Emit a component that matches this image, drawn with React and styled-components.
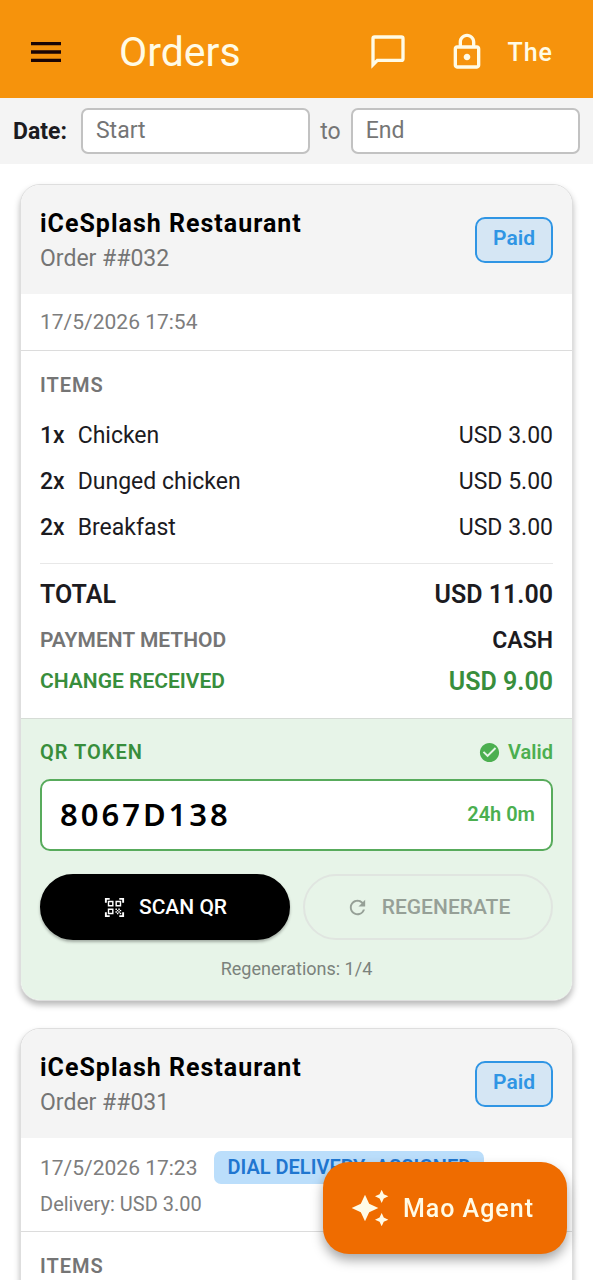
import React from "react";
import styled, { createGlobalStyle } from "styled-components";
import {
  MdAutoAwesome,
  MdCheckCircle,
  MdMenu,
  MdOutlineLock,
  MdQrCodeScanner,
  MdRefresh,
} from "react-icons/md";

const GlobalStyle = createGlobalStyle`
  * {
    box-sizing: border-box;
  }

  body {
    margin: 0;
    background-color: #ffffff;
    color: #1c1b1f;
    font-family: Roboto, "Liberation Sans", sans-serif;
  }

  h1, h2, h3, p, ul, dl, dd {
    margin: 0;
    padding: 0;
  }

  button, input {
    font-family: inherit;
  }
`;

const Screen = styled.div`
  display: flex;
  flex-direction: column;
  height: 100vh;
`;

const AppBar = styled.header`
  display: flex;
  align-items: center;
  flex-shrink: 0;
  height: 98px;
  padding: 6px 40px 0 26px;
  background-color: #f6930c;
  color: #fffbe6;
`;

const IconButton = styled.button`
  display: flex;
  padding: 0;
  border: none;
  background: none;
  color: ${(props) => props.$color || "inherit"};
  cursor: pointer;
`;

const AppTitle = styled.h1`
  flex: 1;
  margin-left: 53px;
  font-size: 41px;
  font-weight: 400;
  line-height: 48px;
`;

const AppActions = styled.div`
  display: flex;
  align-items: center;
`;

const LockButton = styled(IconButton)`
  margin-left: 39px;
`;

const UserName = styled.span`
  margin-left: 20px;
  font-size: 25px;
  font-weight: 500;
  letter-spacing: 1px;
`;

const FilterBar = styled.form`
  display: flex;
  align-items: center;
  flex-shrink: 0;
  gap: 10px;
  padding: 10px 13px;
  background-color: #f4f4f4;
`;

const FilterLabel = styled.label`
  margin-right: ${(props) => (props.$strong ? "4px" : "0")};
  font-size: 23px;
  font-weight: ${(props) => (props.$strong ? 700 : 400)};
  color: ${(props) => (props.$strong ? "#1c1b1f" : "#757575")};
`;

const DateInput = styled.input`
  flex: 1;
  min-width: 0;
  height: 46px;
  padding: 0 13px 2px;
  border: 2px solid #c2c2c2;
  border-radius: 7px;
  background-color: #ffffff;
  font-size: 23px;
  color: #1c1b1f;

  &::placeholder {
    color: #757575;
    opacity: 1;
  }
`;

const OrderList = styled.main`
  display: flex;
  flex-direction: column;
  flex: 1;
  gap: 27px;
  padding: 20px 20px 0;
  overflow-y: auto;
  scrollbar-width: none;
`;

const OrderCard = styled.article`
  flex-shrink: 0;
  border: 1px solid #dedede;
  border-radius: 20px;
  background-color: #ffffff;
  box-shadow: 0 4px 6px rgba(0, 0, 0, 0.28);
  overflow: hidden;
`;

const CardHeader = styled.header`
  display: flex;
  align-items: center;
  justify-content: space-between;
  padding: 19px;
  background-color: #f4f4f4;
`;

const Restaurant = styled.h2`
  font-size: 25px;
  font-weight: 700;
  line-height: 39px;
  letter-spacing: 1px;
  color: #000000;
`;

const OrderNumber = styled.p`
  font-size: 23px;
  line-height: 32px;
  color: #757575;
`;

const StatusBadge = styled.span`
  padding: 6px 16px 10px;
  border: 2px solid #2f95e4;
  border-radius: 10px;
  background-color: #d5e6f4;
  font-size: 21px;
  font-weight: 600;
  line-height: 26px;
  color: #2f95e4;
`;

const Meta = styled.div`
  padding: 13px 19px;
  border-bottom: 1px solid #dcdcdc;
`;

const MetaRow = styled.div`
  display: flex;
  align-items: center;
  gap: 17px;
`;

const OrderDate = styled.p`
  font-size: 21px;
  line-height: 30px;
  color: #7d7d7d;
`;

const DeliveryBadge = styled.span`
  padding: 4px 13px;
  border-radius: 7px;
  background-color: #bbdefb;
  font-size: 20px;
  font-weight: 600;
  line-height: 25px;
  color: #1f76d0;
  white-space: nowrap;
`;

const DeliveryFee = styled.p`
  margin-top: 6px;
  font-size: 20px;
  line-height: 28px;
  color: #7d7d7d;
`;

const Items = styled.section`
  padding: 21px 19px 20px;
`;

const SectionLabel = styled.h3`
  font-size: 20px;
  font-weight: 600;
  line-height: 26px;
  letter-spacing: 1px;
  color: ${(props) => props.$color || "#757575"};
`;

const ItemList = styled.ul`
  display: flex;
  flex-direction: column;
  gap: 13px;
  margin-top: 21px;
  padding-bottom: 19px;
  border-bottom: 1px solid #e8e8e8;
  list-style: none;
`;

const ItemRow = styled.li`
  display: flex;
  font-size: 23px;
  line-height: 33px;
`;

const Quantity = styled.span`
  margin-right: 13px;
  font-weight: 500;
`;

const ItemPrice = styled.span`
  margin-left: auto;
`;

const Summary = styled.dl`
  display: flex;
  flex-direction: column;
  gap: 8px;
  margin-top: 14px;
`;

const SummaryRow = styled.div`
  display: flex;
  justify-content: space-between;
  margin-bottom: ${(props) => (props.$total ? "5px" : "0")};
  line-height: 33px;
  color: ${(props) => props.$color || "#1c1b1f"};
`;

const SummaryName = styled.dt`
  font-size: ${(props) => props.$size || "21px"};
  font-weight: 600;
  color: ${(props) => props.$color || "inherit"};
`;

const SummaryValue = styled.dd`
  font-size: ${(props) => props.$size || "25px"};
  font-weight: 600;
`;

const QrPanel = styled.section`
  padding: 20px 19px 17px;
  border-top: 1px solid #d6dcd6;
  background-color: #e7f4e8;
`;

const QrHeader = styled.div`
  display: flex;
  align-items: center;
  justify-content: space-between;
`;

const Validity = styled.span`
  display: flex;
  align-items: center;
  gap: 7px;
  font-size: 20px;
  font-weight: 600;
  color: #4caf50;
`;

const TokenBox = styled.div`
  display: flex;
  align-items: center;
  justify-content: space-between;
  height: 72px;
  margin-top: 14px;
  padding: 0 16px 2px 18px;
  border: 2px solid #58ab5c;
  border-radius: 10px;
  background-color: #ffffff;
`;

const Token = styled.output`
  font-family: "Noto Sans", "Open Sans", sans-serif;
  font-size: 31px;
  font-weight: 600;
  letter-spacing: 3px;
  color: #000000;
`;

const TimeLeft = styled.span`
  font-size: 20px;
  font-weight: 600;
  color: #4caf50;
`;

const QrActions = styled.div`
  display: flex;
  gap: 13px;
  margin-top: 23px;
`;

const ActionButton = styled.button`
  display: flex;
  flex: 1;
  align-items: center;
  justify-content: center;
  gap: 13px;
  height: 66px;
  padding: 0;
  border: 2px solid #000000;
  border-radius: 33px;
  background-color: #000000;
  box-shadow: 0 2px 3px rgba(0, 0, 0, 0.3);
  font-size: 21px;
  font-weight: 500;
  color: #ffffff;
  cursor: pointer;

  &:disabled {
    border-color: #e0e5e0;
    background-color: transparent;
    box-shadow: none;
    color: #96a097;
    cursor: default;
  }
`;

const Regenerations = styled.p`
  margin-top: 15px;
  font-size: 18px;
  line-height: 28px;
  text-align: center;
  color: #7b827c;
`;

const AgentButton = styled.button`
  position: fixed;
  right: 26px;
  bottom: 26px;
  display: flex;
  align-items: center;
  gap: 13px;
  height: 92px;
  padding: 0 33px 0 27px;
  border: none;
  border-radius: 26px;
  background-color: #ef6c00;
  box-shadow: 0 6px 12px rgba(0, 0, 0, 0.35);
  font-size: 25px;
  font-weight: 500;
  letter-spacing: 1px;
  color: #fffbe6;
  cursor: pointer;
`;

const MessageIcon = () => (
  <svg width="40" height="40" viewBox="0 0 24 24" fill="currentColor" aria-hidden="true">
    <path d="M20 2H4a2 2 0 0 0-2 2v18l4-4h14a2 2 0 0 0 2-2V4a2 2 0 0 0-2-2m0 14H5.2L4 17.2V4h16z" />
  </svg>
);

const orders = [
  {
    number: "#032",
    date: "17/5/2026 17:54",
    items: [
      { quantity: 1, name: "Chicken", price: "3.00" },
      { quantity: 2, name: "Dunged chicken", price: "5.00" },
      { quantity: 2, name: "Breakfast", price: "3.00" },
    ],
    total: "11.00",
    payment: "CASH",
    change: "9.00",
    token: "8067D138",
  },
  {
    number: "#031",
    date: "17/5/2026 17:23",
    delivery: "DIAL DELIVERY: ASSIGNED",
    fee: "3.00",
    items: [],
  },
];

const QrToken = ({ token }) => (
  <QrPanel>
    <QrHeader>
      <SectionLabel $color="#388e3c">QR TOKEN</SectionLabel>
      <Validity>
        <MdCheckCircle size={23} />
        Valid
      </Validity>
    </QrHeader>
    <TokenBox>
      <Token>{token}</Token>
      <TimeLeft>24h 0m</TimeLeft>
    </TokenBox>
    <QrActions>
      <ActionButton type="button">
        <MdQrCodeScanner size={23} />
        SCAN QR
      </ActionButton>
      <ActionButton type="button" disabled>
        <MdRefresh size={23} />
        REGENERATE
      </ActionButton>
    </QrActions>
    <Regenerations>Regenerations: 1/4</Regenerations>
  </QrPanel>
);

const Order = ({ order }) => (
  <OrderCard>
    <CardHeader>
      <div>
        <Restaurant>iCeSplash Restaurant</Restaurant>
        <OrderNumber>Order #{order.number}</OrderNumber>
      </div>
      <StatusBadge>Paid</StatusBadge>
    </CardHeader>
    <Meta>
      <MetaRow>
        <OrderDate>{order.date}</OrderDate>
        {order.delivery && <DeliveryBadge>{order.delivery}</DeliveryBadge>}
      </MetaRow>
      {order.fee && <DeliveryFee>Delivery: USD {order.fee}</DeliveryFee>}
    </Meta>
    <Items>
      <SectionLabel>ITEMS</SectionLabel>
      {order.items.length > 0 && (
        <ItemList>
          {order.items.map((item) => (
            <ItemRow key={item.name}>
              <Quantity>{item.quantity}x</Quantity>
              <span>{item.name}</span>
              <ItemPrice>USD {item.price}</ItemPrice>
            </ItemRow>
          ))}
        </ItemList>
      )}
      {order.total && (
        <Summary>
          <SummaryRow $total>
            <SummaryName $size="25px">TOTAL</SummaryName>
            <SummaryValue>USD {order.total}</SummaryValue>
          </SummaryRow>
          <SummaryRow>
            <SummaryName $color="#757575">PAYMENT METHOD</SummaryName>
            <SummaryValue $size="23px">{order.payment}</SummaryValue>
          </SummaryRow>
          <SummaryRow $color="#388e3c">
            <SummaryName>CHANGE RECEIVED</SummaryName>
            <SummaryValue>USD {order.change}</SummaryValue>
          </SummaryRow>
        </Summary>
      )}
    </Items>
    {order.token && <QrToken token={order.token} />}
  </OrderCard>
);

const App = () => {
  return (
    <Screen>
      <GlobalStyle />
      <AppBar>
        <IconButton type="button" aria-label="Menu" $color="#1a0505">
          <MdMenu size={40} />
        </IconButton>
        <AppTitle>Orders</AppTitle>
        <AppActions>
          <IconButton type="button" aria-label="Messages">
            <MessageIcon />
          </IconButton>
          <LockButton type="button" aria-label="Lock">
            <MdOutlineLock size={40} />
          </LockButton>
          <UserName>The</UserName>
        </AppActions>
      </AppBar>
      <FilterBar>
        <FilterLabel htmlFor="start" $strong>Date:</FilterLabel>
        <DateInput id="start" type="text" placeholder="Start" />
        <FilterLabel htmlFor="end">to</FilterLabel>
        <DateInput id="end" type="text" placeholder="End" />
      </FilterBar>
      <OrderList>
        {orders.map((order) => (
          <Order key={order.number} order={order} />
        ))}
      </OrderList>
      <AgentButton type="button">
        <MdAutoAwesome size={40} />
        Mao Agent
      </AgentButton>
    </Screen>
  );
};

export default App;
